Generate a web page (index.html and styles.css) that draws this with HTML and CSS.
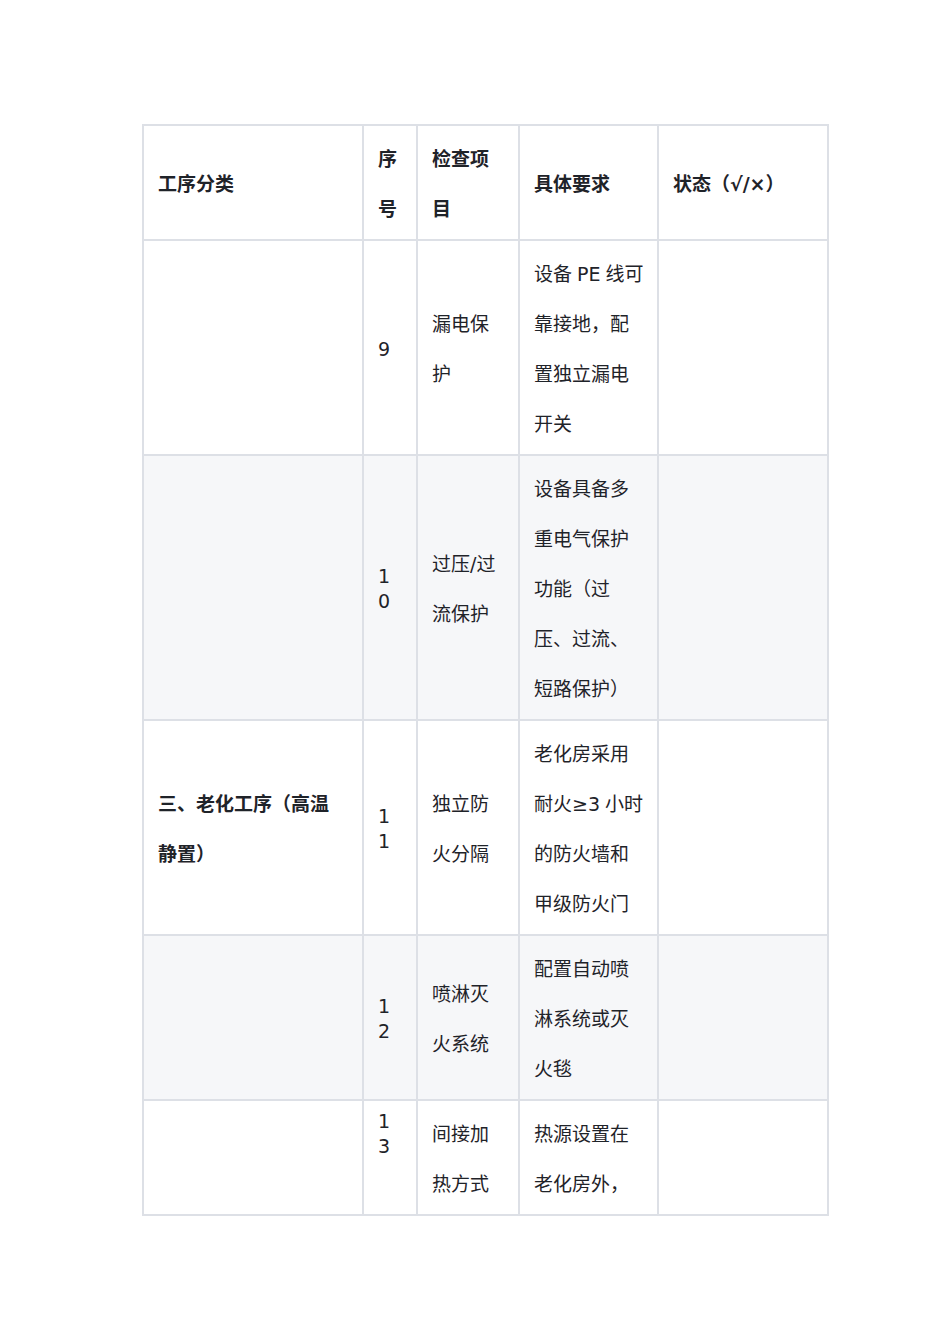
FILE: index.html
```html
<!DOCTYPE html>
<html lang="zh-CN">
<head>
<meta charset="utf-8">
<title>老化工序检查表</title>
<link rel="stylesheet" href="styles.css">
</head>
<body>
<main class="page">
  <table class="check">
    <colgroup>
      <col class="c-cat">
      <col class="c-no">
      <col class="c-item">
      <col class="c-req">
      <col class="c-state">
    </colgroup>
    <thead>
      <tr>
        <th class="cat">工序分类</th>
        <th class="no-h">序号</th>
        <th>检查项目</th>
        <th class="req">具体要求</th>
        <th>状态（√/×）</th>
      </tr>
    </thead>
    <tbody>
      <tr>
        <td class="cat"></td>
        <td class="no">9</td>
        <td>漏电保护</td>
        <td class="req">设备 PE 线可靠接地，配置独立漏电开关</td>
        <td></td>
      </tr>
      <tr class="alt">
        <td class="cat"></td>
        <td class="no">10</td>
        <td>过压/过流保护</td>
        <td class="req">设备具备多重电气保护功能（过压、过流、短路保护）</td>
        <td></td>
      </tr>
      <tr>
        <td class="cat strong">三、老化工序（高温静置）</td>
        <td class="no">11</td>
        <td>独立防火分隔</td>
        <td class="req">老化房采用耐火≥3 小时的防火墙和甲级防火门</td>
        <td></td>
      </tr>
      <tr class="alt">
        <td class="cat"></td>
        <td class="no">12</td>
        <td>喷淋灭火系统</td>
        <td class="req">配置自动喷淋系统或灭火毯</td>
        <td></td>
      </tr>
      <tr class="top">
        <td class="cat"></td>
        <td class="no">13</td>
        <td>间接加热方式</td>
        <td class="req">热源设置在老化房外，</td>
        <td></td>
      </tr>
    </tbody>
  </table>
</main>
</body>
</html>
```
FILE: styles.css
```css
html, body {
  margin: 0;
  padding: 0;
  background: #ffffff;
}

.page {
  padding: 124px 0 0 142px;
}

.check {
  border-collapse: collapse;
  table-layout: fixed;
  width: 685px;
  font-family: "DejaVu Sans", "Noto Sans CJK SC", sans-serif;
  font-size: 19px;
  color: #1f2329;
}

.c-cat { width: 220px; }
.c-no { width: 54px; }
.c-item { width: 102px; }
.c-req { width: 139px; }
.c-state { width: 170px; }

.check th,
.check td {
  border: 2px solid #dde0e6;
  padding: 8px 16px 5px 14px;
  line-height: 50px;
  text-align: left;
  vertical-align: middle;
  word-break: break-all;
}

.check th {
  font-weight: 700;
}

.check .cat {
  padding-right: 18px;
}

.check .req {
  padding-right: 10px;
  word-spacing: -1px;
}

.check td.no {
  line-height: 25px;
}

.check .strong {
  font-weight: 700;
}

.check tr.alt td {
  background: #f6f7f9;
}

.check tr.top td {
  vertical-align: top;
}
```
